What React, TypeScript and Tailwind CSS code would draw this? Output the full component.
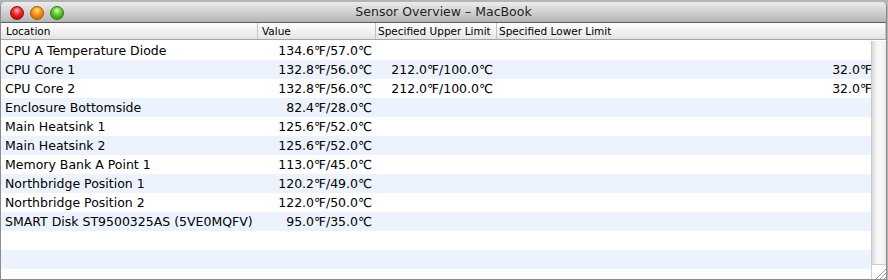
import React from "react";

const rows: [string, string, string, string][] = [
  ["CPU A Temperature Diode", "134.6℉/57.0℃", "", ""],
  ["CPU Core 1", "132.8℉/56.0℃", "212.0℉/100.0℃", "32.0℉/0.0℃"],
  ["CPU Core 2", "132.8℉/56.0℃", "212.0℉/100.0℃", "32.0℉/0.0℃"],
  ["Enclosure Bottomside", "82.4℉/28.0℃", "", ""],
  ["Main Heatsink 1", "125.6℉/52.0℃", "", ""],
  ["Main Heatsink 2", "125.6℉/52.0℃", "", ""],
  ["Memory Bank A Point 1", "113.0℉/45.0℃", "", ""],
  ["Northbridge Position 1", "120.2℉/49.0℃", "", ""],
  ["Northbridge Position 2", "122.0℉/50.0℃", "", ""],
  ["SMART Disk ST9500325AS (5VE0MQFV)", "95.0℉/35.0℃", "", ""],
  ["", "", "", ""],
  ["", "", "", ""],
  ["", "", "", ""],
];

export default function App() {
  return (
    <div className="h-[280px] w-[888px] overflow-hidden bg-[#b4b4b4] pt-[2px] font-['Lucida_Grande','DejaVu_Sans',sans-serif]">
      <div className="flex h-[278px] w-[887px] flex-col overflow-hidden rounded-t-[5px] border-x border-b border-[#8c8c8c] bg-white">
        {/* Title bar */}
        <div className="relative flex h-[21px] shrink-0 items-center justify-center border-b border-[#5e5e5e] bg-[linear-gradient(to_bottom,#ececec,#d4d4d4_45%,#b4b4b4_100%)]">
          <div className="absolute left-[9px] top-[4px] flex gap-[6px]">
            <span className="h-[14px] w-[14px] rounded-full border border-[#8a1010] bg-[radial-gradient(circle_at_50%_30%,#ffc0c0_0%,#f23434_35%,#c20d0d_75%,#ff6a6a_100%)]" />
            <span className="h-[14px] w-[14px] rounded-full border border-[#a05a00] bg-[radial-gradient(circle_at_50%_30%,#ffe5a8_0%,#ff9e1a_35%,#d86e00_75%,#ffc060_100%)]" />
            <span className="h-[14px] w-[14px] rounded-full border border-[#2f7a10] bg-[radial-gradient(circle_at_50%_30%,#d8ffc0_0%,#6fd23a_35%,#3c9a12_75%,#9cf070_100%)]" />
          </div>
          <span className="pt-[1px] text-[12.5px] text-[#1e1e1e]">Sensor Overview – MacBook</span>
        </div>
        {/* Header */}
        <div className="flex h-[17px] shrink-0 border-b border-[#a6a6a6] bg-[linear-gradient(to_bottom,#ffffff,#f2f2f2_50%,#e4e4e4)] pl-[2px] text-[10.5px] leading-[16px] text-black">
          <div className="w-[255px] shrink-0 border-r border-[#c4c4c4] pl-[3px]">Location</div>
          <div className="w-[118px] shrink-0 border-r border-[#c4c4c4] pl-[4px]">Value</div>
          <div className="w-[121px] shrink-0 border-r border-[#c4c4c4] pl-[2px]">Specified Upper Limit</div>
          <div className="flex-1 border-r border-[#c4c4c4] pl-[2px]">Specified Lower Limit</div>
        </div>
        {/* Body */}
        <div className="flex min-h-0 flex-1 pt-[1px]">
          <div className="min-w-0 flex-1 overflow-hidden">
            {rows.map((r, i) => (
              <div
                key={i}
                className={`flex h-[19px] w-[920px] pt-[1px] text-[12.5px] leading-[18px] text-black ${i % 2 === 1 ? "bg-[#edf3fe]" : "bg-white"}`}
              >
                <div className="w-[257px] shrink-0 whitespace-nowrap pl-[4px]">{r[0]}</div>
                <div className="w-[118px] shrink-0 whitespace-nowrap pr-[4px] text-right">{r[1]}</div>
                <div className="w-[121px] shrink-0 whitespace-nowrap pr-[4px] text-right">{r[2]}</div>
                <div className="w-[417px] shrink-0 whitespace-nowrap pr-[4px] text-right">{r[3]}</div>
              </div>
            ))}
          </div>
          {/* Scrollbar */}
          <div className="flex w-[15px] shrink-0 flex-col">
            <div className="flex-1 border-l border-[#c8c8c8] bg-[linear-gradient(to_right,#d8d8d8,#f4f4f4_30%,#fafafa_60%,#ececec)]" />
            <div className="h-[15px] shrink-0 border-l border-t border-[#d0d0d0] bg-white">
              <svg width="15" height="15" viewBox="0 0 15 15">
                <line x1="4" y1="14" x2="14" y2="4" stroke="#9a9a9a" strokeWidth="1" />
                <line x1="8" y1="14" x2="14" y2="8" stroke="#9a9a9a" strokeWidth="1" />
                <line x1="12" y1="14" x2="14" y2="12" stroke="#9a9a9a" strokeWidth="1" />
              </svg>
            </div>
          </div>
        </div>
      </div>
    </div>
  );
}
